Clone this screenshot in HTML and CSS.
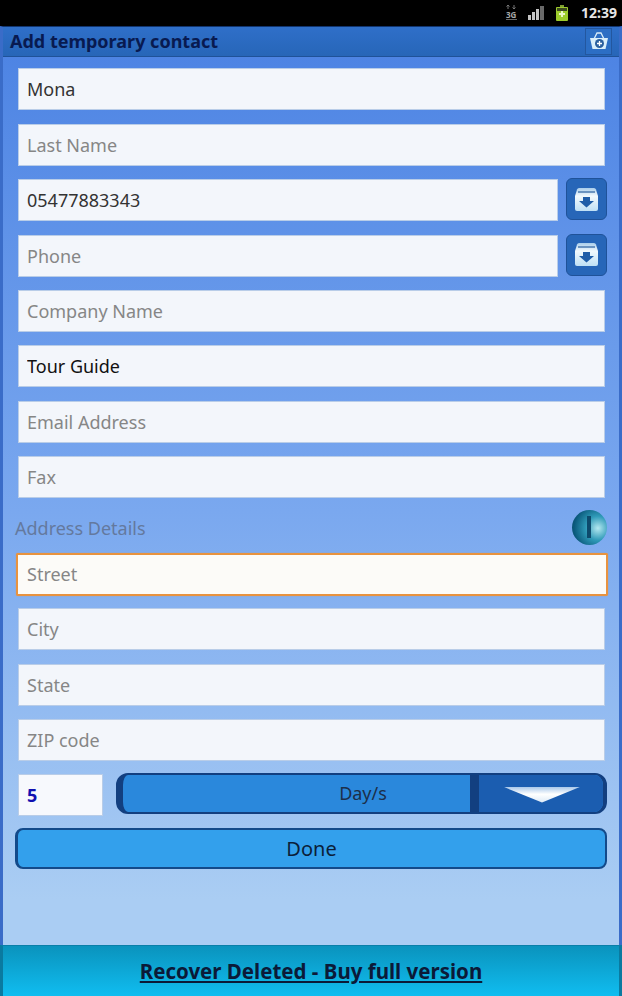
FILE: index.html
```html
<!DOCTYPE html>
<html lang="en">
<head>
    <meta charset="UTF-8">
    <meta name="viewport" content="width=device-width, initial-scale=1.0">
    <title>Add temporary contact</title>
    <link rel="stylesheet" href="styles.css">
</head>
<body>

<div class="status-bar">
    <svg class="status-3g" width="14" height="16" viewBox="0 0 14 16">
        <path d="M4 0v4M2.500 1.500L4 0l1.500 1.500M10 4V0M8.500 2.500L10 4l1.500-1.500" fill="none" stroke="#777" stroke-width="1"/>
        <text x="2" y="13" class="status-3g-text">3G</text>
        <rect x="2" y="14" width="11" height="1" fill="#666"/>
    </svg>
    <svg class="status-signal" width="16" height="14" viewBox="0 0 16 14">
        <rect x="0" y="9" width="3" height="5" fill="#c4c4c4"/>
        <rect x="4" y="6" width="3" height="8" fill="#c4c4c4"/>
        <rect x="8" y="3" width="3" height="11" fill="#c4c4c4"/>
        <rect x="12" y="0" width="4" height="14" fill="#6a6a6a"/>
    </svg>
    <svg class="status-battery" width="12" height="16" viewBox="0 0 12 16">
        <rect x="4" y="0" width="4" height="2" fill="#7e9c34"/>
        <rect x="0" y="2" width="12" height="14" rx="1" fill="#9ccb2c"/>
        <rect x="1" y="3" width="10" height="3" fill="#3c4a20"/>
        <path d="M6 6v6M3 9h6" stroke="#eaf5c8" stroke-width="2"/>
    </svg>
    <span class="status-time">12:39</span>
</div>

<div class="screen">
    <div class="title-bar">
        <h1>Add temporary contact</h1>
        <button class="basket-btn" type="button">
            <svg width="20" height="20" viewBox="0 0 20 20">
                <path d="M5 8l3-6h4l3 6" fill="none" stroke="#d8ecf8" stroke-width="1.300"/>
                <path d="M1 7h18l-2.500 11h-13z" fill="#d9eefa"/>
                <circle cx="10.500" cy="12.500" r="4.500" fill="#2a5f9e"/>
                <path d="M10.500 10v5M8 12.500h5" stroke="#fff" stroke-width="1.300"/>
            </svg>
        </button>
    </div>

    <form class="contact-form">
        <input class="field filled" type="text" value="Mona">
        <input class="field" type="text" placeholder="Last Name">
        <div class="phone-row">
            <input class="field filled" type="text" value="05477883343">
            <button class="pick-btn" type="button">
                <svg width="25" height="25" viewBox="0 0 25 25">
                    <defs>
                        <linearGradient id="boxFill" x1="0" y1="0" x2="0" y2="1">
                            <stop offset="0" stop-color="#a9cdea"/>
                            <stop offset="0.35" stop-color="#f2f9fd"/>
                            <stop offset="1" stop-color="#bfe0f5"/>
                        </linearGradient>
                    </defs>
                    <path d="M1 9l2-6.500Q3.500 1 5 1h15q1.500 0 2 1.500L24 9v13q0 2-2 2H3q-2 0-2-2z" fill="url(#boxFill)"/>
                    <path d="M4 5h17" stroke="#2a5f9e" stroke-width="1.200"/>
                    <path d="M9 10h7v4h4l-7.500 6.500L5 14h4z" fill="#1f5da8"/>
                </svg>
            </button>
        </div>
        <div class="phone-row">
            <input class="field" type="text" placeholder="Phone">
            <button class="pick-btn" type="button">
                <svg width="25" height="25" viewBox="0 0 25 25">
                    <path d="M1 9l2-6.500Q3.500 1 5 1h15q1.500 0 2 1.500L24 9v13q0 2-2 2H3q-2 0-2-2z" fill="url(#boxFill)"/>
                    <path d="M4 5h17" stroke="#2a5f9e" stroke-width="1.200"/>
                    <path d="M9 10h7v4h4l-7.500 6.500L5 14h4z" fill="#1f5da8"/>
                </svg>
            </button>
        </div>
        <input class="field" type="text" placeholder="Company Name">
        <input class="field filled" type="text" value="Tour Guide">
        <input class="field" type="text" placeholder="Email Address">
        <input class="field" type="text" placeholder="Fax">

        <div class="address-head">
            <span>Address Details</span>
            <div class="ball"></div>
        </div>

        <input class="field focused" type="text" placeholder="Street">
        <input class="field" type="text" placeholder="City">
        <input class="field" type="text" placeholder="State">
        <input class="field" type="text" placeholder="ZIP code">

        <div class="days-row">
            <input class="days-input" type="text" value="5">
            <div class="days-select">
                <span class="days-label">Day/s</span>
                <span class="days-arrow"></span>
            </div>
        </div>
        <button class="done-btn" type="button">Done</button>
    </form>

    <div class="footer">
        <a href="#">Recover Deleted - Buy full version</a>
    </div>
</div>

</body>
</html>
```

FILE: styles.css
```css
html, body {
    height: 100%;
}
body {
    font-family: "Noto Sans", "Open Sans", sans-serif;
    background-color: #000;
    margin: 0;
    padding: 0;
    display: flex;
    flex-direction: column;
    overflow: hidden;
}
.status-bar {
    height: 26px;
    flex: none;
    display: flex;
    align-items: center;
    justify-content: flex-end;
    background-color: #000;
    padding-right: 5px;
}
.status-3g {
    margin-right: 10px;
}
.status-3g-text {
    font-size: 8px;
    font-weight: bold;
    fill: #a8a8a8;
}
.status-signal {
    margin-right: 12px;
}
.status-battery {
    margin-right: 13px;
}
.status-time {
    color: #e6e6e6;
    font-size: 14px;
    font-weight: 700;
    line-height: 26px;
}
.screen {
    flex: 1;
    display: flex;
    flex-direction: column;
    background: linear-gradient(#4b82e3 0%, #7aa8ef 50%, #aacdf3 90%);
    border-left: 3px solid #3a6cc8;
    border-right: 3px solid #3a6cc8;
    border-top: 1px solid #12356e;
}
.title-bar {
    height: 28px;
    flex: none;
    display: flex;
    align-items: center;
    justify-content: space-between;
    background: linear-gradient(#2f6fc9, #2766b8);
    border-bottom: 1px solid #1f5299;
    padding: 0 7px 1px 7px;
}
h1 {
    margin: 0;
    font-size: 18px;
    font-weight: 700;
    color: #081a50;
}
.basket-btn {
    width: 27px;
    height: 27px;
    padding: 0;
    border: 1px solid #23579f;
    background-color: #2c6ec4;
    display: flex;
    align-items: center;
    justify-content: center;
}
.contact-form {
    flex: 1;
    display: flex;
    flex-direction: column;
    padding: 11.400px 14px 0 15px;
}
.field {
    height: 42px;
    flex: none;
    box-sizing: border-box;
    width: 100%;
    margin: 0 0 13.400px;
    padding: 0 8px;
    font-family: inherit;
    font-size: 18px;
    color: #7c7c7c;
    background-color: #f3f6fb;
    border: 1px solid #b9cde8;
    border-radius: 0;
    outline: none;
}
.field::placeholder {
    color: #868686;
    opacity: 1;
}
.field.filled {
    color: #111;
}
.field:first-child {
    color: #333;
}
.field.focused {
    width: 592px;
    height: 43px;
    margin: 0 -2px 12.500px;
    background-color: #fcfbf8;
    border: 2px solid #e8933f;
    border-radius: 2px;
    box-shadow: 0 0 1px #e8933f;
    padding: 0 9px;
}
.phone-row {
    display: flex;
    align-items: flex-start;
    height: 42px;
    flex: none;
    margin-bottom: 13.400px;
}
.phone-row .field {
    flex: 1;
    width: auto;
    margin: 0;
}
.pick-btn {
    width: 41px;
    height: 42px;
    flex: none;
    margin: -1px -2px 0 8px;
    padding: 0;
    border: 1px solid #1f5299;
    border-radius: 6px;
    background-color: #2766b8;
    display: flex;
    align-items: center;
    justify-content: center;
}
.address-head {
    height: 44px;
    margin: -6px -2px 3.400px -3px;
    flex: none;
    display: flex;
    align-items: center;
    justify-content: space-between;
    font-size: 18px;
    color: #64799e;
}
.ball {
    width: 35px;
    height: 35px;
    position: relative;
    border-radius: 50%;
    background: radial-gradient(circle at 74% 52%, #b4e8f0 0%, #2f9ab8 38%, #0b5a7c 75%, #093f5e 100%);
}
.ball::after {
    content: "";
    position: absolute;
    left: 15px;
    top: 6px;
    width: 4px;
    height: 22px;
    background-color: #0d4a6c;
}
.days-row {
    display: flex;
    align-items: flex-start;
    flex: none;
    height: 44px;
    margin-top: -2px;
    margin-bottom: 11px;
}
.days-input {
    width: 85px;
    height: 42px;
    flex: none;
    box-sizing: border-box;
    margin-top: 1px;
    padding: 0 8px;
    font-family: inherit;
    font-size: 18px;
    font-weight: 700;
    color: #1010b0;
    background-color: #f7f9fd;
    border: 1px solid #b9cde8;
    outline: none;
}
.days-select {
    flex: 1;
    position: relative;
    display: flex;
    height: 41px;
    margin: 0 -2px 0 13px;
    box-sizing: border-box;
    border: 2px solid #123f80;
    border-left-width: 7px;
    border-right-width: 4px;
    border-radius: 12px;
    background-color: #2a88dc;
    overflow: hidden;
}
.days-label {
    flex: 1;
    text-align: center;
    font-size: 18px;
    line-height: 37px;
    color: #1c2f4a;
}
/* sits on top of the select so the label stays centred over the full width */
.days-arrow {
    position: absolute;
    right: 0;
    top: 0;
    bottom: 0;
    width: 133px;
    box-sizing: border-box;
    border-left: 9px solid #123f80;
    background-color: #1b5db0;
}
.days-arrow::after {
    content: "";
    position: absolute;
    left: 24px;
    top: 12px;
    width: 78px;
    height: 16px;
    clip-path: polygon(0 0, 100% 0, 50% 100%);
    background: linear-gradient(#a9c8ea, #ffffff 45%, #dce9f6);
}
.done-btn {
    height: 41px;
    flex: none;
    margin: 0 -2px 0 -3px;
    padding: 0;
    font-family: inherit;
    font-size: 20px;
    color: #0b1f3a;
    background-color: #33a0ec;
    border: 2px solid #134a8a;
    border-left-width: 3px;
    border-radius: 8px;
}
.footer {
    height: 50px;
    flex: none;
    display: flex;
    align-items: center;
    justify-content: center;
    background: linear-gradient(#0a93bd, #10bdf0);
    border-top: 1px solid #0a7fa8;
    border-left: 3px solid #0a7aa0;
    border-right: 3px solid #0a7aa0;
    margin: 0 -3px;
}
.footer a {
    font-size: 20.500px;
    font-weight: 700;
    color: #0b1a38;
}
```
